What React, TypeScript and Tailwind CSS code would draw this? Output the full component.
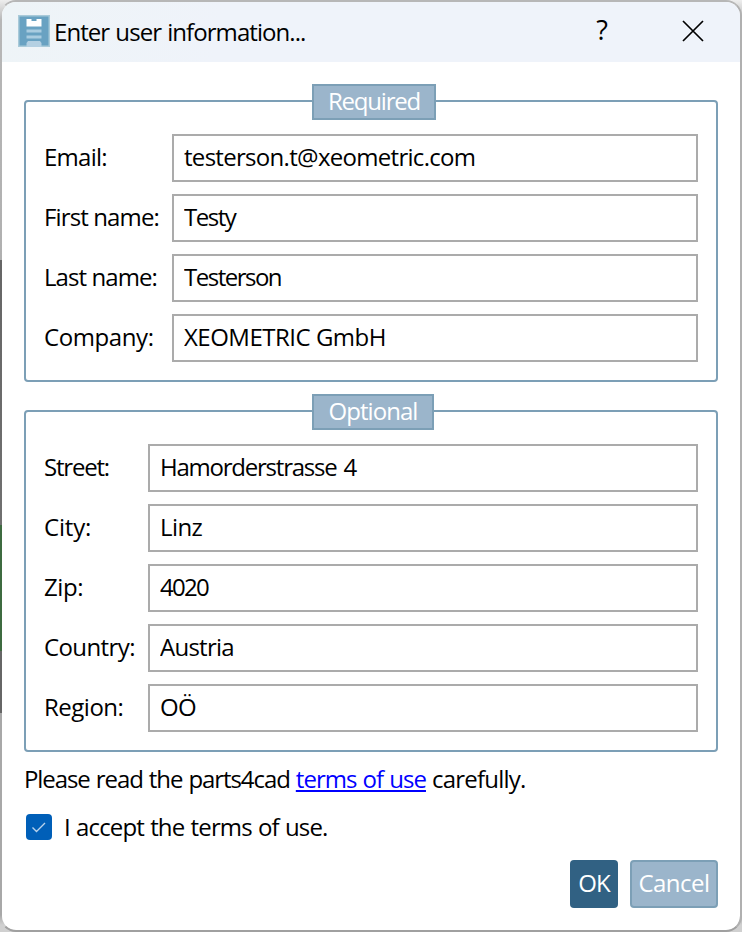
import { PropsWithChildren, useState } from 'react'

type FieldData = {
  label: string
  value: string
  labelClass: string
  valueClass: string
}

const requiredFields: FieldData[] = [
  {
    label: 'Email:',
    value: 'testerson.t@xeometric.com',
    labelClass: 'tracking-[-0.75px]',
    valueClass: 'tracking-[-0.7px]',
  },
  { label: 'First name:', value: 'Testy', labelClass: 'tracking-[-0.87px]', valueClass: 'tracking-[-1.5px]' },
  { label: 'Last name:', value: 'Testerson', labelClass: 'tracking-[-0.93px]', valueClass: 'tracking-[-1.5px]' },
  { label: 'Company:', value: 'XEOMETRIC GmbH', labelClass: 'tracking-[-0.4px]', valueClass: 'tracking-[-0.5px]' },
]

const optionalFields: FieldData[] = [
  {
    label: 'Street:',
    value: 'Hamorderstrasse 4',
    labelClass: 'tracking-[-1.2px]',
    valueClass: 'tracking-[-1.23px] [word-spacing:2px]',
  },
  { label: 'City:', value: 'Linz', labelClass: 'tracking-[-0.2px]', valueClass: 'tracking-[-0.6px]' },
  { label: 'Zip:', value: '4020', labelClass: 'tracking-[-0.4px]', valueClass: 'tracking-[-1.7px]' },
  { label: 'Country:', value: 'Austria', labelClass: 'tracking-[-0.6px]', valueClass: 'tracking-[-0.75px]' },
  { label: 'Region:', value: 'OÖ', labelClass: 'tracking-[-0.5px]', valueClass: 'tracking-[-0.7px]' },
]

function AppIcon() {
  return (
    <svg className="h-8 w-8 shrink-0" viewBox="0 0 32 32">
      <rect width="32" height="32" fill="#a9cad9" />
      <rect x="1.5" y="1.5" width="29" height="29" fill="#69a2c2" />
      <path d="M8.5 4h5v2h5V4h5v7.5h-15z" fill="#fff" />
      <path d="M8.5 14.5h15v3h-15zM8.5 20.5h15v3h-15z" fill="#a9cce0" />
      <path d="M10 26h12l1.5 2v4h-15v-4z" fill="#b4d0e2" />
    </svg>
  )
}

function Field({ label, value, labelClass, valueClass, labelWidth }: FieldData & { labelWidth: string }) {
  return (
    <label className="flex h-12 items-center">
      <span className={`shrink-0 pb-0.5 whitespace-nowrap ${labelWidth} ${labelClass}`}>{label}</span>
      <input
        className={`h-12 min-w-0 flex-1 border-2 border-[#ababab] bg-white px-2.5 pb-[3px] focus:outline-none ${valueClass}`}
        defaultValue={value}
      />
    </label>
  )
}

function Group({ title, titleClass, children }: PropsWithChildren<{ title: string; titleClass: string }>) {
  return (
    <section className="relative rounded border-2 border-[#7c9fb6] px-[18px] pt-8 pb-[18px]">
      <h2
        className={`absolute -top-[18px] left-[286px] flex h-9 items-center justify-center border-2 border-[#7c9fb6] bg-[#9bb5cb] pb-0.5 text-white ${titleClass}`}
      >
        {title}
      </h2>
      <div className="flex flex-col gap-3">{children}</div>
    </section>
  )
}

export default function App() {
  const [accepted, setAccepted] = useState(true)

  return (
    <div className="h-[932px] w-[742px] bg-[linear-gradient(to_bottom,#eeeeee_0,#b7b7b7_20px,#b0b0b0_260px,#666666_260px,#707070_525px,#3e6b40_525px,#3e6b40_651px,#666666_651px,#666666_713px,#a8a8a8_713px,#a8a8a8_915px,#d0d0d0_925px)] font-['Open_Sans',sans-serif] text-2xl leading-8 text-black">
      <div className="flex h-full flex-col overflow-hidden rounded-2xl border-2 border-t-[#b7b7b7] border-r-[#b0b0b0] border-b-[#a0a0a0] border-l-transparent bg-white bg-clip-padding">
        <header className="flex h-[60px] shrink-0 items-center bg-[linear-gradient(100deg,#eef4f7,#eff3fa_30%)] pr-9 pb-[3px] pl-4">
          <AppIcon />
          <h1 className="ml-1 flex-1 pt-[3px] tracking-[-0.93px] [word-spacing:0.8px]">Enter user information...</h1>
          <button className="mr-[74px] pb-px text-[27px]">?</button>
          <button aria-label="Close">
            <svg className="h-[22px] w-[22px]" viewBox="0 0 22 22" stroke="#000" strokeWidth="1.7">
              <path d="M1 1l20 20M21 1L1 21" />
            </svg>
          </button>
        </header>
        <main className="flex flex-1 flex-col px-[22px] pt-[38px] pb-[22px]">
          <Group title="Required" titleClass="w-[124px] tracking-[-1.2px]">
            {requiredFields.map(field => (
              <Field key={field.label} {...field} labelWidth="w-32" />
            ))}
          </Group>
          <div className="h-7" />
          <Group title="Optional" titleClass="w-[122px] tracking-[-0.95px]">
            {optionalFields.map(field => (
              <Field key={field.label} {...field} labelWidth="w-[104px]" />
            ))}
          </Group>
          <p className="mt-[11px] tracking-[-1.08px] whitespace-nowrap [word-spacing:0.9px]">
            Please read the parts4cad{' '}
            <a href="#terms" className="tracking-[-0.98px] text-[#0000ff] underline">
              terms of use
            </a>{' '}
            <span className="tracking-[-0.8px]">carefully.</span>
          </p>
          <label className="mt-4 ml-0.5 flex h-8 items-center gap-3">
            <input
              type="checkbox"
              className="sr-only"
              checked={accepted}
              onChange={e => setAccepted(e.target.checked)}
            />
            <span className="flex h-[26px] w-[26px] items-center justify-center rounded bg-[#005fb8]">
              {accepted && (
                <svg className="h-[26px] w-[26px]" viewBox="0 0 26 26" fill="none" stroke="#b9d3ec" strokeWidth="1.4">
                  <path d="M6.5 13.5l4 4 8.5-8.5" />
                </svg>
              )}
            </span>
            <span className="tracking-[-0.83px] [word-spacing:0.7px]">I accept the terms of use.</span>
          </label>
          <div className="mt-auto flex justify-end gap-3">
            <button className="h-12 w-12 rounded bg-[#316183] pb-0.5 tracking-[-1px] text-white">OK</button>
            <button className="h-12 w-[88px] rounded border-2 border-[#7c9fb6] bg-[#9bb5cb] pb-0.5 tracking-[-0.5px] text-white">
              Cancel
            </button>
          </div>
        </main>
      </div>
    </div>
  )
}
